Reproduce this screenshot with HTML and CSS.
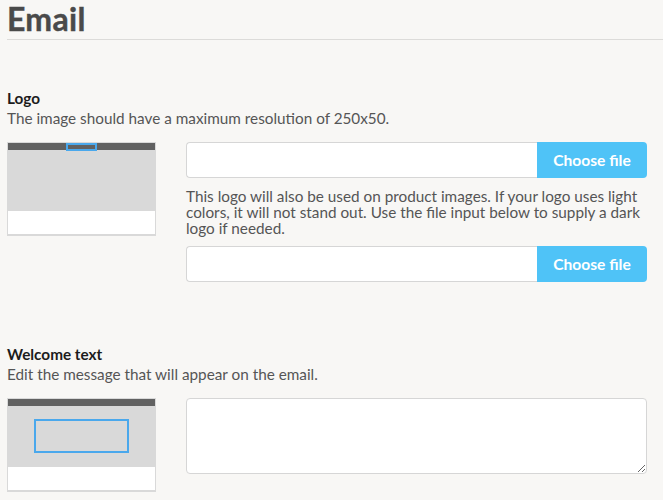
FILE: index.html
```html
<!DOCTYPE html>
<html>
<head>
<meta charset="utf-8">
<link rel="stylesheet" href="styles.css">
</head>
<body>
<div class="page">
  <h1 class="title">Email</h1>

  <section class="section section-logo">
    <div class="label">Logo</div>
    <div class="desc">The image should have a maximum resolution of 250x50.</div>
    <div class="row">
      <div class="preview">
        <div class="bar"></div>
        <div class="body"></div>
        <div class="foot"></div>
        <div class="mark mark-logo"></div>
      </div>
      <div class="fields">
        <div class="file">
          <div class="file-box"></div>
          <button class="file-btn">Choose file</button>
        </div>
        <p class="note">This logo will also be used on product images. If your logo uses light colors, it will not stand out. Use the file input below to supply a dark logo if needed.</p>
        <div class="file">
          <div class="file-box"></div>
          <button class="file-btn">Choose file</button>
        </div>
      </div>
    </div>
  </section>

  <section class="section section-welcome">
    <div class="label">Welcome text</div>
    <div class="desc">Edit the message that will appear on the email.</div>
    <div class="row">
      <div class="preview">
        <div class="bar"></div>
        <div class="body"></div>
        <div class="foot"></div>
        <div class="mark mark-text"></div>
      </div>
      <div class="fields">
        <textarea class="area"></textarea>
      </div>
    </div>
  </section>
</div>
</body>
</html>
```

FILE: styles.css
```css
html, body {
  margin: 0;
  padding: 0;
  background: #f8f7f5;
  font-family: Lato, "Open Sans", sans-serif;
  overflow: hidden;
}

.page {
  padding: 0 0 0 7px;
}

.title {
  margin: 0;
  padding: 1px 0 2px 0;
  height: 36px;
  font-size: 32px;
  line-height: 36px;
  font-weight: 700;
  letter-spacing: 0.3px;
  color: #4a4a4a;
  border-bottom: 1px solid #dcdbd9;
  -webkit-text-stroke: 0.4px #4a4a4a;
}

.section-logo {
  margin-top: 48px;
}

.section-welcome {
  margin-top: 62px;
}

.label {
  font-size: 15.3px;
  line-height: 20px;
  font-weight: 700;
  color: #1c1c1c;
}

.desc {
  font-size: 15.3px;
  line-height: 20px;
  color: #555;
}

.row {
  display: flex;
  align-items: flex-start;
  gap: 30px;
  margin-top: 14px;
  margin-right: 16px;
}

.preview {
  position: relative;
  flex: 0 0 auto;
  width: 147px;
  border: 1px solid #d9d9d9;
  border-bottom-width: 2px;
  display: flex;
  flex-direction: column;
}

.bar {
  height: 7px;
  background: #616161;
}

.body {
  height: 61px;
  background: #d9d9d9;
}

.foot {
  height: 23px;
  background: #fff;
}

.mark {
  position: absolute;
  border: 2px solid #4aa8ec;
  box-sizing: border-box;
}

.mark-logo {
  left: 58px;
  top: 0;
  width: 31px;
  height: 8px;
}

.mark-text {
  left: 26px;
  top: 20px;
  width: 95px;
  height: 34px;
}

.fields {
  flex: 1 1 auto;
  display: flex;
  flex-direction: column;
}

.file {
  display: flex;
  height: 36px;
}

.file-box {
  flex: 1 1 auto;
  background: #fff;
  border: 1px solid #d6d6d6;
  border-right: none;
  border-radius: 4px 0 0 4px;
}

.file-btn {
  flex: 0 0 110px;
  border: none;
  margin: 0;
  padding: 0;
  background: #4fc3f7;
  color: #fff;
  font-family: Lato, "Open Sans", sans-serif;
  font-weight: 700;
  font-size: 15.6px;
  border-radius: 0 4px 4px 0;
}

.note {
  margin: 10px 0 10px 0;
  font-size: 15.3px;
  line-height: 16px;
  color: #555;
}

.area {
  display: block;
  box-sizing: border-box;
  width: 100%;
  height: 76px;
  margin: 0;
  background: #fff;
  border: 1px solid #d6d6d6;
  border-radius: 4px;
  font-family: Lato, sans-serif;
}
```
